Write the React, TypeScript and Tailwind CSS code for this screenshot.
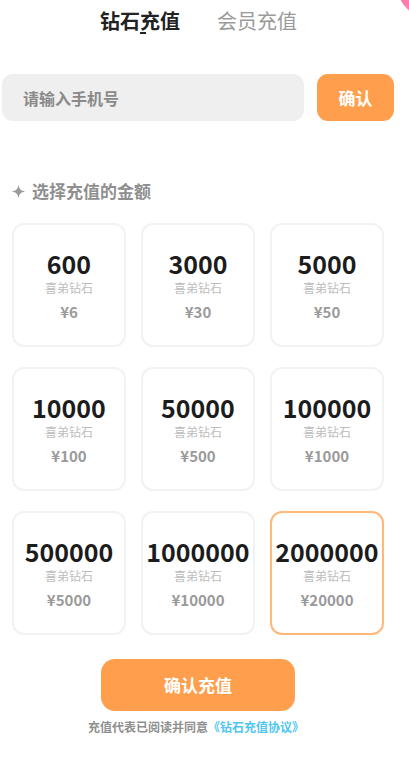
import React from "react";

const items = [
  { n: "600", p: "¥6" },
  { n: "3000", p: "¥30" },
  { n: "5000", p: "¥50" },
  { n: "10000", p: "¥100" },
  { n: "50000", p: "¥500" },
  { n: "100000", p: "¥1000" },
  { n: "500000", p: "¥5000" },
  { n: "1000000", p: "¥10000" },
  { n: "2000000", p: "¥20000" },
];

export default function App() {
  const font = { fontFamily: '"Noto Sans CJK SC", "Noto Sans", sans-serif' };
  return (
    <div className="relative w-[409px] h-[760px] bg-white overflow-hidden" style={font}>
      <div className="absolute left-[397px] top-[-48px] w-[66px] h-[66px] rounded-full bg-[#ff7eab]" />
      <div className="relative flex pl-[100px] pt-[5px] h-[40px] items-start gap-[37px]">
        <div className="relative text-[20px] leading-[32px] font-bold text-[#222]">
          钻石充值
          <div className="absolute left-[40px] top-[27px] w-[6px] h-[2px] bg-[#222]" />
        </div>
        <div className="text-[20px] leading-[32px] text-[#9a9a9a]">会员充值</div>
      </div>
      <div className="flex mt-[34px] pl-[2px] pr-[15px] gap-[13px]">
        <div className="w-[302px] h-[47px] rounded-[11px] bg-[#efefef] flex items-center pl-[21px] text-[16px] font-bold text-[#8a8a8a]">
          请输入手机号
        </div>
        <div className="w-[77px] h-[47px] rounded-[11px] bg-[#ff9f4d] flex items-center justify-center text-[17px] font-bold text-white">
          确认
        </div>
      </div>
      <div className="flex items-center mt-[57px] pl-[12px] h-[26px] gap-[7px] text-[17px] font-bold text-[#8f8f8f]">
        <svg width="13" height="13" viewBox="0 0 12 12">
          <path d="M6 0 C6.9 3.9 8.1 5.1 12 6 C8.1 6.9 6.9 8.1 6 12 C5.1 8.1 3.9 6.9 0 6 C3.9 5.1 5.1 3.9 6 0Z" fill="#9a9a9a" />
        </svg>
        <span>选择充值的金额</span>
      </div>
      <div className="grid grid-cols-[114px_114px_114px] gap-x-[15px] gap-y-[20px] px-[12px] mt-[19px]">
        {items.map((it, i) => (
          <div
            key={i}
            className={
              "h-[124px] rounded-[12px] border-2 flex flex-col items-center justify-center " +
              (i === 8 ? "border-[#ffb877]" : "border-[#f1f2f5]")
            }
          >
            <div className="text-[25px] leading-[28px] font-bold text-[#1c1c1c]">{it.n}</div>
            <div className="mt-[3px] text-[12px] leading-[16px] text-[#bdbdbd]">喜弟钻石</div>
            <div className="mt-[6px] text-[15px] leading-[20px] font-bold text-[#9a9a9a]">{it.p}</div>
          </div>
        ))}
      </div>
      <div className="flex justify-center mt-[24px] pr-[13px]">
        <div className="w-[194px] h-[52px] rounded-[14px] bg-[#ff9f4d] flex items-center justify-center text-[17px] font-bold text-white">
          确认充值
        </div>
      </div>
      <div className="flex justify-center mt-[8px] pr-[17px] text-[12px] leading-[16px] font-bold text-[#8f8f8f]">
        <span>充值代表已阅读并同意</span>
        <span className="text-[#4fc6f2]">《钻石充值协议》</span>
      </div>
    </div>
  );
}
